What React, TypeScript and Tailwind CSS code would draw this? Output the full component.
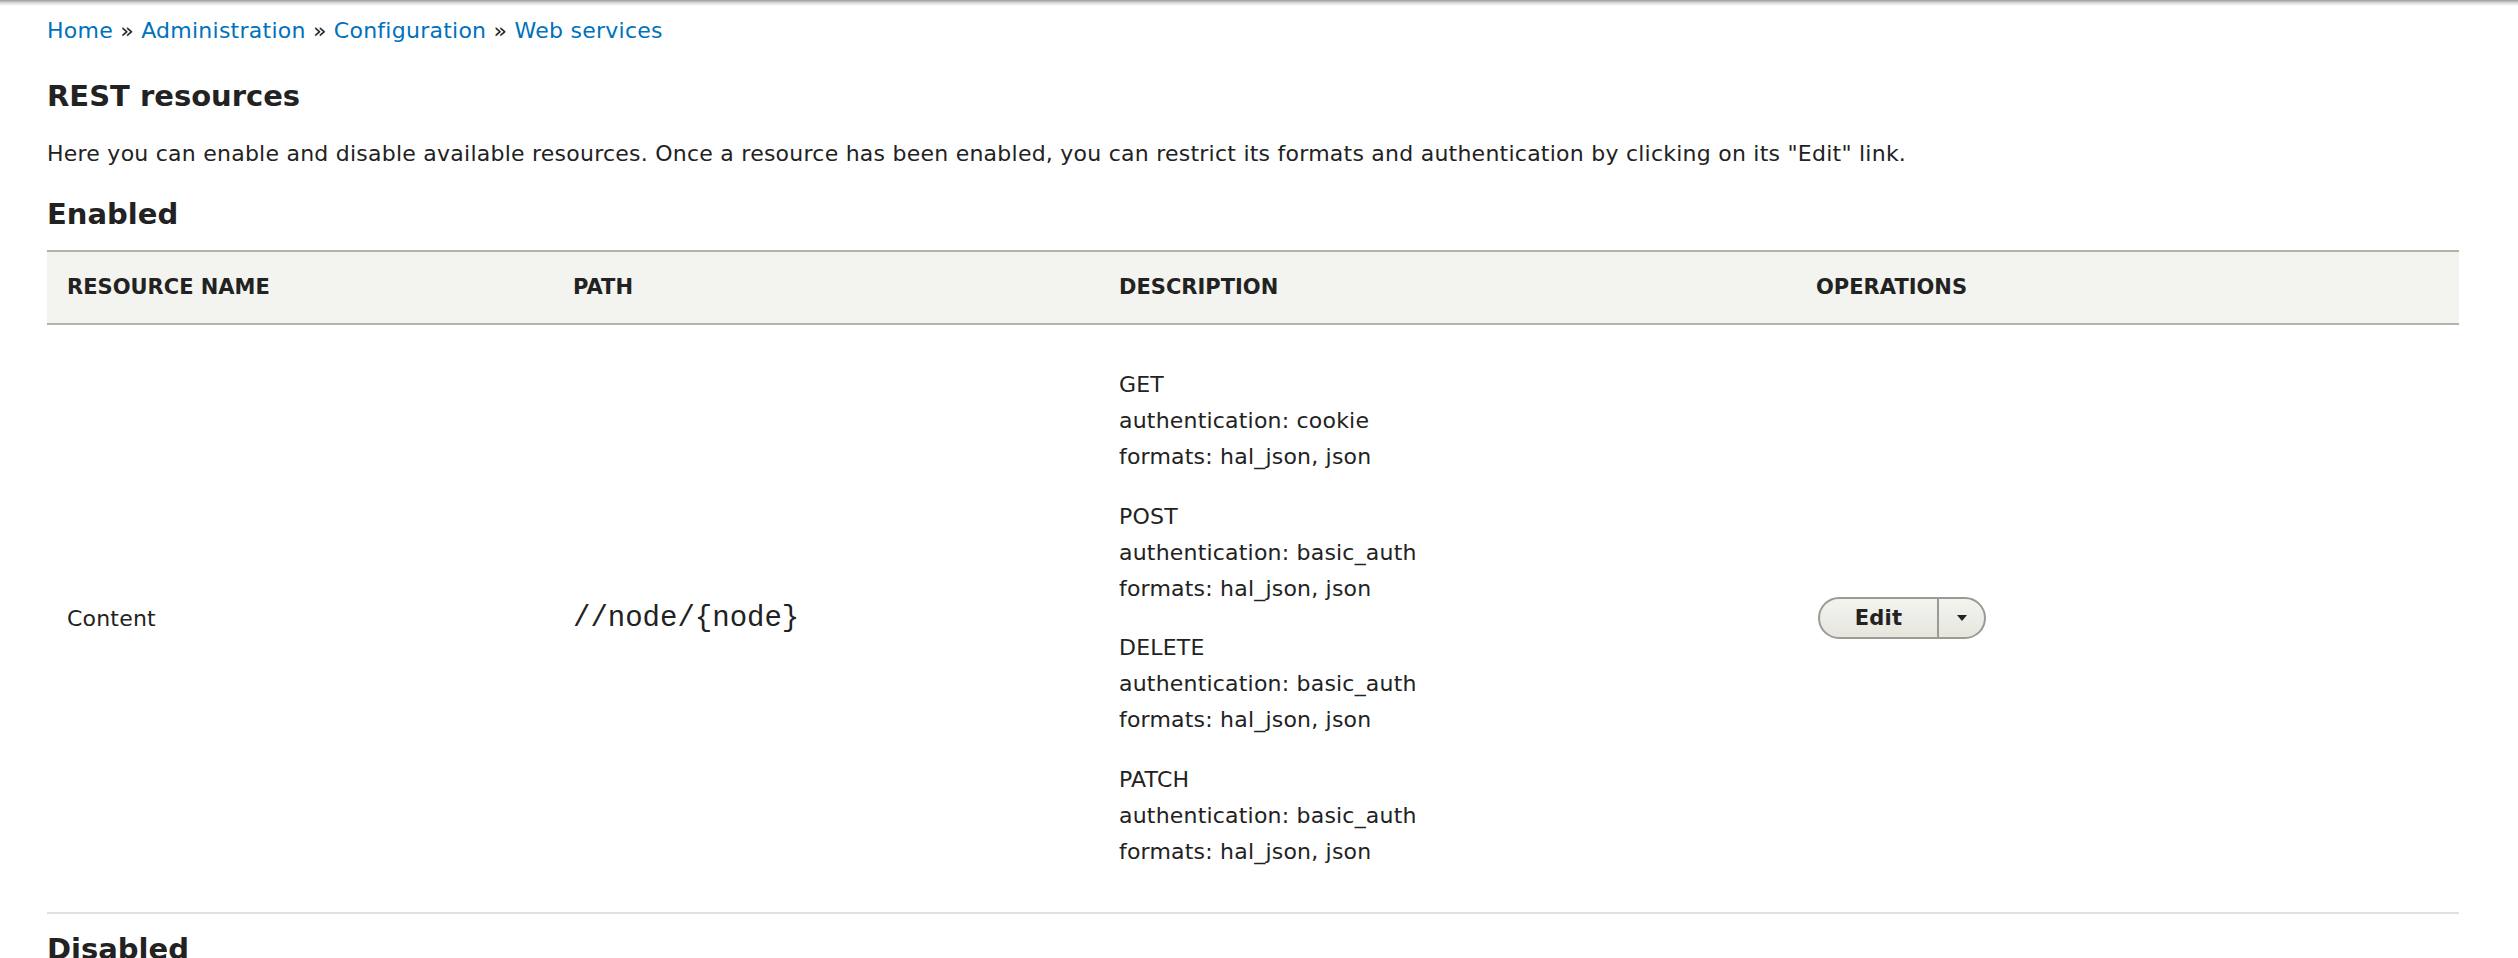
const crumbs = ["Home", "Administration", "Configuration", "Web services"];

const methods = [
  { name: "GET", auth: "cookie" },
  { name: "POST", auth: "basic_auth" },
  { name: "DELETE", auth: "basic_auth" },
  { name: "PATCH", auth: "basic_auth" },
];

const cols = "grid grid-cols-[506px_546px_697px_1fr]";

function EditButton() {
  return (
    <div className="flex h-[42px] w-[168px] overflow-hidden rounded-full border-2 border-[#9a9a96] bg-gradient-to-b from-[#f4f4ef] to-[#e6e5de]">
      <button
        type="button"
        className="flex w-[117px] items-center justify-center text-[21px] font-bold text-[#222]"
      >
        Edit
      </button>
      <span className="w-[2px] bg-[#9a9a96]" />
      <button type="button" aria-label="More" className="flex flex-1 items-center justify-center">
        <svg width="12" height="6" viewBox="0 0 12 6">
          <path d="M1 0h10L6 6z" fill="#222" />
        </svg>
      </button>
    </div>
  );
}

export default function App() {
  return (
    <div className="min-h-screen bg-white font-['DejaVu_Sans',sans-serif] text-[#222]">
      <div className="h-[6px] bg-gradient-to-b from-[#9c9c9c] via-[#dcdcdc] to-white" />
      <div className="pl-[47px] pr-[59px]">
        <nav className="mt-[10px] text-[22px] leading-[30px] tracking-[0.25px] text-[#0071bc]">
          {crumbs.map((c, i) => (
            <span key={c}>
              {i > 0 ? <span className="text-[#222]"> » </span> : null}
              <a href="#" className="hover:underline">
                {c}
              </a>
            </span>
          ))}
        </nav>

        <h1 className="mt-[32px] text-[29px] font-bold leading-[36px]">REST resources</h1>
        <p className="mt-[25px] text-[22px] leading-[30px] tracking-[0.24px]">
          Here you can enable and disable available resources. Once a resource has been enabled, you can
          restrict its formats and authentication by clicking on its "Edit" link.
        </p>

        <h2 className="mt-[27px] text-[29px] font-bold leading-[36px]">Enabled</h2>

        <div className="mt-[18px]">
          <div
            className={`${cols} h-[75px] items-center border-y-2 border-[#b3b3ab] bg-[#f3f3ef] text-[21px] font-bold uppercase`}
          >
            <div className="pl-[20px]">Resource name</div>
            <div className="pl-[20px]">Path</div>
            <div className="pl-[20px]">Description</div>
            <div className="pl-[20px]">Operations</div>
          </div>

          <div className={`${cols} items-center border-b-2 border-[#e2e0da] text-[22px] tracking-[0.2px]`}>
            <div className="pl-[20px]">Content</div>
            <div className="pl-[20px] font-['Liberation_Mono',monospace] text-[29px] tracking-normal">
              //node/{"{node}"}
            </div>
            <div className="flex flex-col gap-[23.5px] py-[42px] pl-[20px] leading-[36px]">
              {methods.map((m) => (
                <div key={m.name}>
                  <div>{m.name}</div>
                  <div>authentication: {m.auth}</div>
                  <div>formats: hal_json, json</div>
                </div>
              ))}
            </div>
            <div className="pl-[22px]">
              <EditButton />
            </div>
          </div>
        </div>

        <h2 className="mt-[17px] text-[29px] font-bold leading-[36px]">Disabled</h2>
      </div>
    </div>
  );
}
